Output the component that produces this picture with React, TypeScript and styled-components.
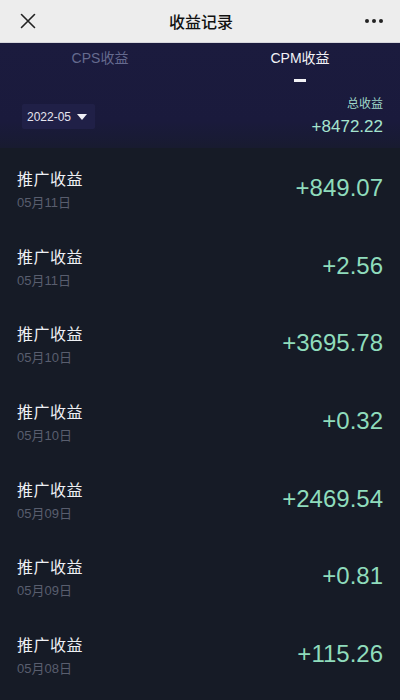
import React from "react";
import styled, { createGlobalStyle } from "styled-components";

const GlobalStyle = createGlobalStyle`
  html, body {
    margin: 0;
    padding: 0;
    background: #161b26;
  }
  body {
    font-family: "Liberation Sans", "Noto Sans CJK SC", sans-serif;
  }
`;

const StyPage = styled.div`
  width: 400px;
  height: 700px;
  overflow: hidden;
  background: #161b26;
`;

const StyNav = styled.div`
  height: 43px;
  display: flex;
  align-items: center;
  justify-content: space-between;
  padding: 0 14px 0 16px;
  background: #ededed;
  border-bottom: 1px solid #d6d6dc;
  box-sizing: border-box;
`;

const StyNavTitle = styled.div`
  font-size: 16px;
  font-weight: 500;
  color: #111;
`;

const StyNavIcon = styled.div`
  width: 24px;
  display: flex;
  align-items: center;
  justify-content: center;
`;

const StyHeader = styled.div`
  background: linear-gradient(180deg, #1b1b3e 0%, #1a1a3c 75%, #181b30 100%);
  padding: 4px 17px 12px 22px;
  height: 105px;
  box-sizing: border-box;
`;

const StyTabs = styled.div`
  display: flex;
  margin: 0 -17px 0 -22px;
`;

const StyTab = styled.div<{ $active?: boolean }>`
  flex: 1;
  display: flex;
  flex-direction: column;
  align-items: center;
  font-size: 14px;
  color: ${(p) => (p.$active ? "#f2f2f6" : "#656a8e")};
  &::after {
    content: "";
    display: block;
    width: 12px;
    height: 3px;
    margin-top: 12px;
    background: ${(p) => (p.$active ? "#f2f2f6" : "transparent")};
  }
`;

const StySummary = styled.div`
  display: flex;
  justify-content: space-between;
  align-items: flex-end;
  margin-top: 12px;
`;

const StySelect = styled.div`
  display: flex;
  align-items: center;
  gap: 6px;
  height: 25px;
  padding: 0 8px 0 5px;
  margin-bottom: 8px;
  background: #202047;
  border-radius: 2px;
  font-size: 12px;
  color: #e4e4ee;
`;

const StyArrow = styled.span`
  width: 0;
  height: 0;
  border-left: 5px solid transparent;
  border-right: 5px solid transparent;
  border-top: 6px solid #f0f0f6;
`;

const StyTotal = styled.div`
  display: flex;
  flex-direction: column;
  align-items: flex-end;
`;

const StyTotalLabel = styled.div`
  font-size: 12px;
  color: #9fd8c8;
`;

const StyTotalValue = styled.div`
  font-size: 17px;
  color: #a6e4cf;
  margin-top: 6px;
`;

const StyList = styled.div`
  display: flex;
  flex-direction: column;
`;

const StyRow = styled.div`
  height: 77.7px;
  display: flex;
  align-items: flex-start;
  justify-content: space-between;
  padding: 21px 17px 0;
  box-sizing: border-box;
`;

const StyRowLeft = styled.div`
  display: flex;
  flex-direction: column;
  gap: 3px;
`;

const StyRowTitle = styled.div`
  font-size: 16px;
  line-height: 22px;
  color: #eef0f4;
  letter-spacing: 0.5px;
`;

const StyRowDate = styled.div`
  font-size: 13px;
  line-height: 18px;
  color: #595e6e;
`;

const StyAmount = styled.div`
  font-size: 24px;
  line-height: 28px;
  color: #8fdcbc;
  margin-top: 5px;
`;

const rows = [
  { date: "05月11日", amount: "+849.07" },
  { date: "05月11日", amount: "+2.56" },
  { date: "05月10日", amount: "+3695.78" },
  { date: "05月10日", amount: "+0.32" },
  { date: "05月09日", amount: "+2469.54" },
  { date: "05月09日", amount: "+0.81" },
  { date: "05月08日", amount: "+115.26" },
];

function App() {
  return (
    <StyPage>
      <GlobalStyle />
      <StyNav>
        <StyNavIcon>
          <svg width="16" height="16" viewBox="0 0 16 16">
            <path d="M1.5 1.5 L14.5 14.5 M14.5 1.5 L1.5 14.5" stroke="#222" strokeWidth="1.6" strokeLinecap="round" />
          </svg>
        </StyNavIcon>
        <StyNavTitle>收益记录</StyNavTitle>
        <StyNavIcon>
          <svg width="20" height="6" viewBox="0 0 20 6">
            <circle cx="3" cy="3" r="2" fill="#222" />
            <circle cx="10" cy="3" r="2" fill="#222" />
            <circle cx="17" cy="3" r="2" fill="#222" />
          </svg>
        </StyNavIcon>
      </StyNav>

      <StyHeader>
        <StyTabs>
          <StyTab>CPS收益</StyTab>
          <StyTab $active>CPM收益</StyTab>
        </StyTabs>
        <StySummary>
          <StySelect>
            2022-05
            <StyArrow />
          </StySelect>
          <StyTotal>
            <StyTotalLabel>总收益</StyTotalLabel>
            <StyTotalValue>+8472.22</StyTotalValue>
          </StyTotal>
        </StySummary>
      </StyHeader>

      <StyList>
        {rows.map((r, i) => (
          <StyRow key={i}>
            <StyRowLeft>
              <StyRowTitle>推广收益</StyRowTitle>
              <StyRowDate>{r.date}</StyRowDate>
            </StyRowLeft>
            <StyAmount>{r.amount}</StyAmount>
          </StyRow>
        ))}
      </StyList>
    </StyPage>
  );
}

export default App;
